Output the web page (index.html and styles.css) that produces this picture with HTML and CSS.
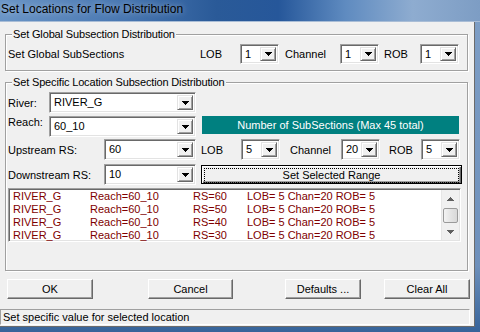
FILE: index.html
```html
<!DOCTYPE html>
<html lang="en">
<head>
  <meta charset="UTF-8">
  <title>Set Locations for Flow Distribution</title>
  <link rel="stylesheet" href="styles.css">
</head>
<body>
  <div class="window">
    <!-- Title bar -->
    <div class="titlebar">
      <span class="title">Set Locations for Flow Distribution</span>
    </div>

    <div class="client">
      <!-- Global distribution -->
      <div class="group global">
        <span class="legend">Set Global Subsection Distribution</span>
        <div class="row">
          <span class="lbl" style="width:192px">Set Global SubSections</span>
          <span class="lbl" style="width:40px">LOB</span>
          <div class="combo small"><span class="value">1</span><span class="drop"><svg width="7" height="4" viewBox="0 0 7 4"><path d="M0 0h7v1h-1v1h-1v1h-1v1h-1v-1h-1v-1h-1v-1h-1z"/></svg></span></div>
          <span class="lbl" style="width:55px;margin-left:6px">Channel</span>
          <div class="combo small"><span class="value">1</span><span class="drop"><svg width="7" height="4" viewBox="0 0 7 4"><path d="M0 0h7v1h-1v1h-1v1h-1v1h-1v-1h-1v-1h-1v-1h-1z"/></svg></span></div>
          <span class="lbl" style="width:36px;margin-left:5px">ROB</span>
          <div class="combo small"><span class="value">1</span><span class="drop"><svg width="7" height="4" viewBox="0 0 7 4"><path d="M0 0h7v1h-1v1h-1v1h-1v1h-1v-1h-1v-1h-1v-1h-1z"/></svg></span></div>
        </div>
      </div>

      <!-- Specific location distribution -->
      <div class="group specific">
        <span class="legend">Set Specific Location Subsection Distribution</span>

        <div class="row r-river">
          <span class="lbl" style="width:41px">River:</span>
          <div class="combo wide"><span class="value">RIVER_G</span><span class="drop"><svg width="7" height="4" viewBox="0 0 7 4"><path d="M0 0h7v1h-1v1h-1v1h-1v1h-1v-1h-1v-1h-1v-1h-1z"/></svg></span></div>
        </div>

        <div class="row r-reach">
          <span class="lbl" style="width:41px">Reach:</span>
          <div class="combo wide"><span class="value">60_10</span><span class="drop"><svg width="7" height="4" viewBox="0 0 7 4"><path d="M0 0h7v1h-1v1h-1v1h-1v1h-1v-1h-1v-1h-1v-1h-1z"/></svg></span></div>
          <div class="info">Number of SubSections (Max 45 total)</div>
        </div>

        <div class="row r-up">
          <span class="lbl" style="width:96px">Upstream RS:</span>
          <div class="combo rs"><span class="value">60</span><span class="drop"><svg width="7" height="4" viewBox="0 0 7 4"><path d="M0 0h7v1h-1v1h-1v1h-1v1h-1v-1h-1v-1h-1v-1h-1z"/></svg></span></div>
          <span class="lbl" style="width:40px;margin-left:5px">LOB</span>
          <div class="combo small"><span class="value">5</span><span class="drop"><svg width="7" height="4" viewBox="0 0 7 4"><path d="M0 0h7v1h-1v1h-1v1h-1v1h-1v-1h-1v-1h-1v-1h-1z"/></svg></span></div>
          <span class="lbl" style="width:51px;margin-left:10px">Channel</span>
          <div class="combo small"><span class="value">20</span><span class="drop"><svg width="7" height="4" viewBox="0 0 7 4"><path d="M0 0h7v1h-1v1h-1v1h-1v1h-1v-1h-1v-1h-1v-1h-1z"/></svg></span></div>
          <span class="lbl" style="width:32px;margin-left:9px">ROB</span>
          <div class="combo small"><span class="value">5</span><span class="drop"><svg width="7" height="4" viewBox="0 0 7 4"><path d="M0 0h7v1h-1v1h-1v1h-1v1h-1v-1h-1v-1h-1v-1h-1z"/></svg></span></div>
        </div>

        <div class="row r-down">
          <span class="lbl" style="width:96px">Downstream RS:</span>
          <div class="combo rs"><span class="value">10</span><span class="drop"><svg width="7" height="4" viewBox="0 0 7 4"><path d="M0 0h7v1h-1v1h-1v1h-1v1h-1v-1h-1v-1h-1v-1h-1z"/></svg></span></div>
          <button class="btn default-btn"><span class="focus">Set Selected Range</span></button>
        </div>

        <!-- Location list -->
        <div class="listbox">
          <div class="items">
            <div class="item"><span class="c1">RIVER_G</span><span class="c2">Reach=60_10</span><span class="c3">RS=60</span><span>LOB= 5 Chan=20 ROB= 5</span></div>
            <div class="item"><span class="c1">RIVER_G</span><span class="c2">Reach=60_10</span><span class="c3">RS=50</span><span>LOB= 5 Chan=20 ROB= 5</span></div>
            <div class="item"><span class="c1">RIVER_G</span><span class="c2">Reach=60_10</span><span class="c3">RS=40</span><span>LOB= 5 Chan=20 ROB= 5</span></div>
            <div class="item"><span class="c1">RIVER_G</span><span class="c2">Reach=60_10</span><span class="c3">RS=30</span><span>LOB= 5 Chan=20 ROB= 5</span></div>
          </div>
          <div class="scrollbar">
            <span class="arrow"><svg width="7" height="4" viewBox="0 0 7 4"><path d="M3 0h1v1h1v1h1v1h1v1h-7v-1h1v-1h1v-1h1z"/></svg></span>
            <span class="thumb"></span>
            <span class="arrow"><svg width="7" height="4" viewBox="0 0 7 4"><path d="M0 0h7v1h-1v1h-1v1h-1v1h-1v-1h-1v-1h-1v-1h-1z"/></svg></span>
          </div>
        </div>
      </div>

      <!-- Dialog buttons -->
      <div class="buttons">
        <button class="btn" style="width:86px">OK</button>
        <button class="btn" style="width:85px;margin-left:55px">Cancel</button>
        <button class="btn" style="width:76px;margin-left:52px">Defaults ...</button>
        <button class="btn" style="width:86px;margin-left:23px">Clear All</button>
      </div>

      <div class="status">Set specific value for selected location</div>
    </div>
  </div>
</body>
</html>
```

FILE: styles.css
```css
/* General Styles */
body {
  margin: 0;
  padding: 0;
  width: 480px;
  height: 332px;
  overflow: hidden;
  font-family: "Liberation Sans", Arial, sans-serif;
  font-size: 11px;
  color: #000;
}

.window {
  display: flex;
  flex-direction: column;
  height: 332px;
  background: linear-gradient(180deg, #7f9fc6 0%, #6e90bb 80%, #36639a 100%);
}

/* Title bar */
.titlebar {
  height: 22px;
  flex: none;
  background: linear-gradient(90deg, #6a95c6 0%, #4a78b2 25%, #2a5a98 45%, #26579a 58%, #5f8bc0 72%, #8eacd0 86%, #7d9dc4 100%);
  border-bottom: 1px solid #a9bdd6;
  box-sizing: border-box;
}

.title {
  display: inline-block;
  padding-left: 1px;
  font-size: 12px;
  line-height: 19px;
  color: #000;
  text-shadow: 0 0 6px rgba(255, 255, 255, 0.55);
}

/* Client area */
.client {
  flex: 1;
  display: flex;
  flex-direction: column;
  margin-right: 5px;
  margin-bottom: 5px;
  background-color: #f0f0f0;
  border-right: 1px solid #6b6b6b;
  border-bottom: 1px solid #6b6b6b;
}

/* Group boxes */
.group {
  position: relative;
  box-sizing: border-box;
  width: 463px;
  margin-left: 5px;
  border: 1px solid #a0a0a0;
  box-shadow: inset 1px 1px 0 #fff, 1px 1px 0 #fff;
  padding-left: 2px;
}

.group.global {
  margin-top: 12px;
  padding-top: 9px;
  padding-bottom: 6px;
}

.group.specific {
  margin-top: 11px;
  padding-top: 9px;
  padding-bottom: 28px;
}

.legend {
  position: absolute;
  top: -7px;
  left: 6px;
  padding: 0 1px;
  line-height: 13px;
  letter-spacing: -0.15px;
  background-color: #f0f0f0;
}

.row {
  display: flex;
  align-items: center;
}

.lbl {
  flex: none;
  white-space: nowrap;
}

.r-river { margin-bottom: 3px; }
.r-reach { margin-bottom: 2px; align-items: flex-start; }
.r-up { margin-bottom: 4px; }
.r-down { margin-bottom: 3px; }

/* Combo boxes */
.combo {
  flex: none;
  display: flex;
  box-sizing: border-box;
  height: 21px;
  padding: 1px;
  border: 1px solid;
  border-color: #a0a0a0 #fff #fff #a0a0a0;
  box-shadow: inset 1px 1px 0 #696969, inset -1px -1px 0 #e3e3e3;
  background-color: #fff;
}

.global .combo { height: 20px; }

.combo.small { width: 39px; }
.combo.wide { width: 147px; }
.combo.rs { width: 92px; }

.combo .value {
  flex: 1;
  padding-left: 3px;
  line-height: 15px;
  margin-top: 1px;
  overflow: hidden;
}

.drop {
  flex: none;
  display: flex;
  align-items: center;
  justify-content: center;
  box-sizing: border-box;
  width: 16px;
  margin: 1px 1px 1px 0;
  background-color: #f0f0f0;
  border: 1px solid;
  border-color: #e3e3e3 #696969 #696969 #e3e3e3;
  box-shadow: inset 1px 1px 0 #fff, inset -1px -1px 0 #a0a0a0;
}

.drop svg {
  display: block;
  fill: #000;
  shape-rendering: crispEdges;
}

/* Teal info bar */
.info {
  flex: none;
  width: 257px;
  height: 18px;
  margin-left: 6px;
  background-color: #008080;
  color: #fff;
  text-align: center;
  line-height: 18px;
}

/* Buttons */
.btn {
  flex: none;
  box-sizing: border-box;
  height: 20px;
  padding: 0;
  font-family: inherit;
  font-size: 11px;
  color: #000;
  background-color: #f0f0f0;
  border: 1px solid;
  border-color: #fff #696969 #696969 #fff;
  box-shadow: inset -1px -1px 0 #a0a0a0;
}

.default-btn {
  width: 261px;
  height: 19px;
  margin-left: 5px;
  padding: 2px;
  border: 1px solid #000;
  box-shadow: inset 1px 1px 0 #fff, inset -1px -1px 0 #696969, inset -2px -2px 0 #a0a0a0;
}

.default-btn .focus {
  display: block;
  height: 13px;
  line-height: 13px;
  border: 1px dotted #000;
}

/* List box */
.listbox {
  display: flex;
  box-sizing: border-box;
  width: 453px;
  height: 54px;
  border: 1px solid;
  border-color: #a0a0a0 #fff #fff #a0a0a0;
  box-shadow: inset 1px 1px 0 #696969, inset -1px -1px 0 #e3e3e3;
  padding: 1px;
  background-color: #fff;
}

.items {
  flex: 1;
  padding-left: 3px;
  color: #800000;
}

.item {
  display: flex;
  height: 13px;
  line-height: 13px;
  white-space: nowrap;
}

.c1 { width: 77px; }
.c2 { width: 103px; }
.c3 { width: 54px; }

.scrollbar {
  flex: none;
  display: flex;
  flex-direction: column;
  align-items: center;
  width: 17px;
  background-color: #f0f0f0;
  border-left: 1px solid #e6e6e6;
}

.scrollbar .arrow {
  display: flex;
  align-items: center;
  justify-content: center;
  height: 17px;
  width: 17px;
}

.scrollbar .arrow svg {
  fill: #606060;
  shape-rendering: crispEdges;
}

.thumb {
  box-sizing: border-box;
  width: 15px;
  height: 15px;
  margin: 1px 0 0;
  border: 1px solid #9a9a9a;
  border-radius: 2px;
  background: linear-gradient(90deg, #f3f3f3, #e4e4e4 50%, #d8d8d8);
}

.scrollbar .arrow:last-child {
  margin-top: auto;
}

/* Bottom buttons */
.buttons {
  display: flex;
  margin-top: 8px;
  padding-left: 7px;
}

/* Status bar */
.status {
  box-sizing: border-box;
  width: 470px;
  height: 16px;
  margin-top: 10px;
  padding-left: 2px;
  line-height: 14px;
  border: 1px solid;
  border-color: #a0a0a0 #fff #fff #a0a0a0;
}
```
